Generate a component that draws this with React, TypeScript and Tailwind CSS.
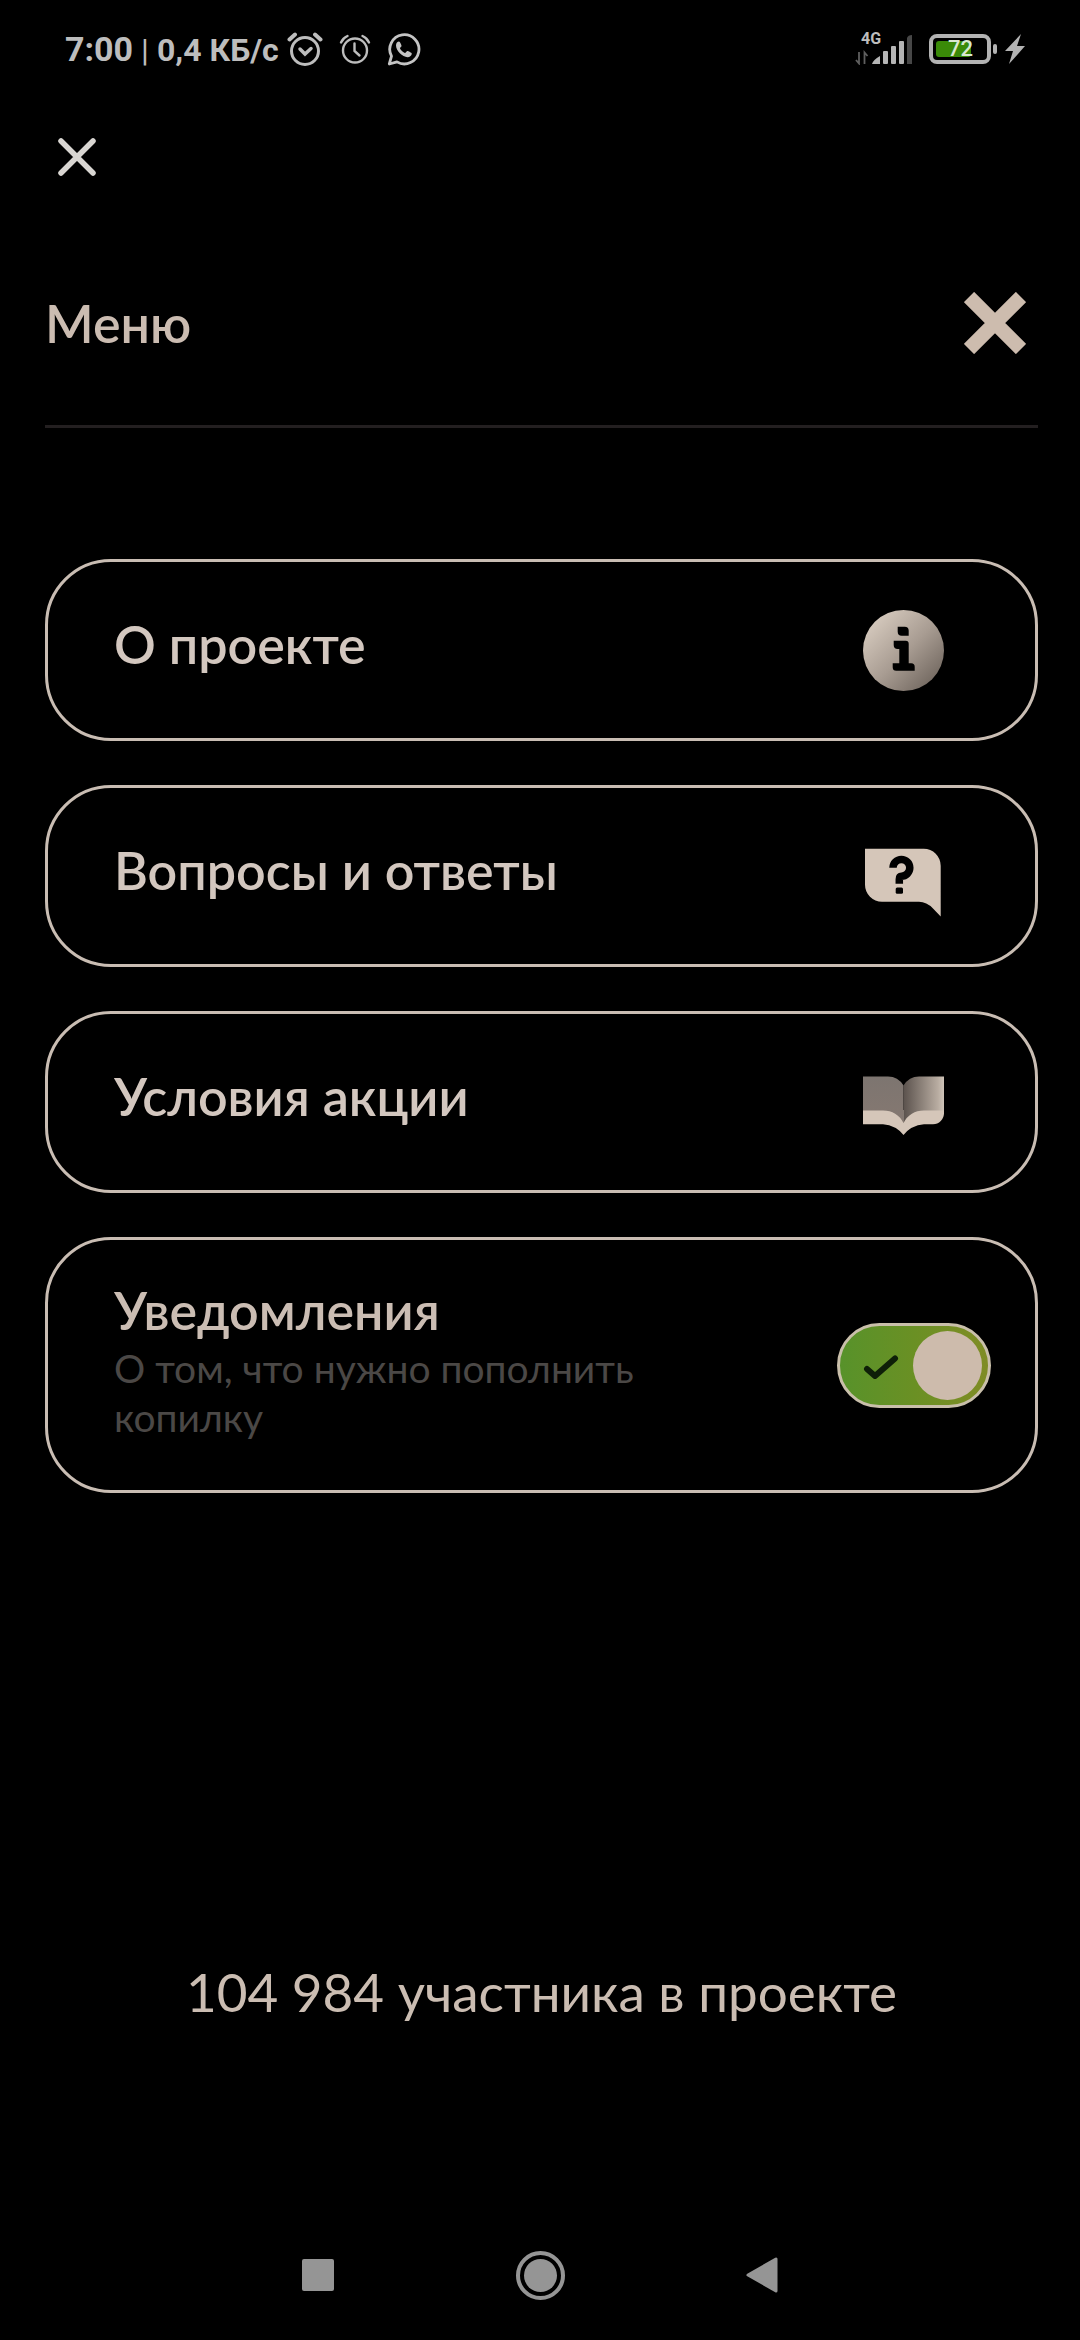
import { useState, type ReactNode } from "react"

function AlarmCheckIcon() {
  return (
    <svg width="36" height="36" viewBox="0 0 36 36" fill="none" stroke="#bdbdbd" strokeWidth="3" strokeLinecap="round">
      <circle cx="18" cy="20" r="13.5" />
      <path d="M2.5 8.5 8 3.5M33.5 8.5 28 3.5" strokeWidth="4" />
      <path d="m13 18 5 5 6-5.5" strokeWidth="3.5" />
    </svg>
  )
}

function AlarmIcon() {
  return (
    <svg width="32" height="32" viewBox="0 0 32 32" fill="none" stroke="#bdbdbd" strokeWidth="2.4" strokeLinecap="round">
      <circle cx="16" cy="17.5" r="12" />
      <path d="M2 9.5Q4 5 8.5 3M30 9.5Q28 5 23.5 3" />
      <path d="M15.5 10.5V18l5 4.5" />
    </svg>
  )
}

function WhatsAppIcon() {
  return (
    <svg width="34" height="34" viewBox="0 0 34 34" fill="none">
      <path
        d="M2.3 32 4.5 24.2A14.6 14.6 0 1 1 10 29.9Z"
        stroke="#c4c4c4"
        strokeWidth="2.8"
        strokeLinejoin="round"
      />
      <path
        d="M12 9.5c-1.500 0-3 1.600-3 4 0 5.500 6.500 11.500 11.500 11.700 2.400 0 4.300-1.700 4.300-3.700 0-.7-4-2.700-4.600-2.500-.7.2-1.500 2-2.200 2-1.400-.2-4.900-3.300-5-4.700 0-.7 1.600-1.500 1.600-2.200S13 9.500 12 9.500Z"
        fill="#c4c4c4"
      />
    </svg>
  )
}

function SignalIcon() {
  return (
    <svg width="58" height="32" viewBox="0 0 58 32">
      <path d="M4 19v11.500L1 27M9.500 31V19.500l3 3.500" fill="none" stroke="#5f5f5f" strokeWidth="1.8" />
      <path d="M17 31q1-4 8-8v8Z" fill="#b5b5b5" />
      <rect x="28" y="18" width="5" height="13" rx="1" fill="#b5b5b5" />
      <rect x="36" y="13" width="5" height="18" rx="1" fill="#b5b5b5" />
      <rect x="44" y="8" width="5" height="23" rx="1" fill="#b5b5b5" />
      <path d="M52 5q1-3 5-3v29h-5Z" fill="#474747" />
    </svg>
  )
}

function InfoIcon() {
  return (
    <svg width="81" height="81" viewBox="0 0 81 81">
      <defs>
        <linearGradient id="info" x1="0.15" y1="0.15" x2="0.9" y2="0.9">
          <stop offset="0" stopColor="#d2c6ba" />
          <stop offset="0.5" stopColor="#a89c92" />
          <stop offset="1" stopColor="#71675f" />
        </linearGradient>
      </defs>
      <circle cx="40.5" cy="40.5" r="40.5" fill="url(#info)" />
      <path d="M34.7 16.7h7q4 0 4 4v5h-7q-4 0-4-4Z" />
      <path d="M30.700 30.700h12q3 0 3 3v19.600h2.500q3.500 0 3.500 3.500v4H33.200q-3.500 0-3.500-3.500v-4h6.600V39h-1.600q-4 0-4-4Z" />
    </svg>
  )
}

function QuestionIcon() {
  return (
    <svg width="81" height="81" viewBox="0 0 81 81" fill="none">
      <path d="M2 12.8h58.7a17 17 0 0 1 17 17v50.7L70 72.5Q63.5 65.800 56 65.8H19a17 17 0 0 1-17-17Z" fill="#d5c6b9" />
      <path d="M30 31.8a8.4 8.4 0 1 1 8.4 8.4q-2.100 0-2.100 3v4.6" stroke="#000" strokeWidth="7.5" />
      <rect x="32.7" y="51.5" width="7.3" height="6.3" rx="1.5" fill="#000" />
    </svg>
  )
}

function BookIcon() {
  return (
    <svg width="81" height="81" viewBox="0 0 81 81">
      <defs>
        <linearGradient id="pageLeft" x1="0" y1="0" x2="0" y2="1">
          <stop offset="0" stopColor="#7d7570" />
          <stop offset="1" stopColor="#857871" />
        </linearGradient>
        <linearGradient id="pageRight">
          <stop offset="0" stopColor="#5b524d" />
          <stop offset="0.85" stopColor="#b8aca1" />
          <stop offset="1" stopColor="#cfc4b9" />
        </linearGradient>
      </defs>
      <path d="M0 48h81v3.3a11 11 0 0 1-11 11H61Q48 63.5 40.5 73 33 63.5 20 62.3H0Z" fill="#d5c6b9" />
      <path d="M0 14.5h25q10 0 15.5 9V61Q34 48.5 20 48.5H0Z" fill="url(#pageLeft)" />
      <path d="M81 14.5H56q-10 0-15.5 9V61Q47 48.5 61 48.5h20Z" fill="url(#pageRight)" />
    </svg>
  )
}

function StatusBar() {
  return (
    <div className="flex h-[98px] items-center justify-between pr-[55px] pl-[65px] font-[Roboto,sans-serif] text-[#bdbdbd]">
      <div className="flex items-center">
        <div className="flex items-baseline gap-2 leading-10">
          <span className="text-[34px] font-bold">7:00</span>
          <span className="text-[32px]">|</span>
          <span className="text-[32px] font-bold">0,4 КБ/с</span>
        </div>
        <div className="ml-2 flex items-center gap-4">
          <AlarmCheckIcon />
          <AlarmIcon />
          <WhatsAppIcon />
        </div>
      </div>
      <div className="flex items-center">
        <div className="relative">
          <SignalIcon />
          <span className="absolute -top-1 left-1.5 text-base leading-5 font-bold">4G</span>
        </div>
        <div className="ml-4 flex h-[30px] w-[62px] items-center rounded-lg border-4 border-[#b3b3b3] px-[3px]">
          <div className="flex h-4 w-[35px] items-center rounded-[3px] bg-[#3a8a08] pl-3 text-[22px] leading-4 font-medium text-[#d9e8d0]">
            72
          </div>
        </div>
        <div className="ml-0.5 h-2.5 w-1 rounded-sm bg-[#b3b3b3]" />
        <svg className="ml-2" width="20" height="30" viewBox="0 0 20 30" fill="#b3b3b3">
          <path d="M16 0 0 17h8L4 30 20 12h-8Z" />
        </svg>
      </div>
    </div>
  )
}

function MenuItem({ title, icon }: { title: string; icon: ReactNode }) {
  return (
    <button
      type="button"
      className="flex h-[182px] w-full items-center justify-between rounded-[66px] border-[3px] border-[#c9bdb3] pr-[91px] pl-[66px] text-left"
    >
      <span className="pb-3 text-[52px] leading-[62px] font-semibold text-[#d3c7bf]">{title}</span>
      {icon}
    </button>
  )
}

function NotificationsItem() {
  const [enabled, setEnabled] = useState(true)

  return (
    <div className="flex items-center justify-between rounded-[66px] border-[3px] border-[#c9bdb3] pr-11 pl-[66px]">
      <div className="max-w-[600px] pt-[39px] pb-12">
        <label htmlFor="notifications" className="block text-[52px] leading-[62px] font-semibold text-[#cbbdb3]">
          Уведомления
        </label>
        <p id="notifications-hint" className="pt-[3px] text-[39px] leading-[49px] text-[#4b4846]">
          О том, что нужно пополнить копилку
        </p>
      </div>
      <div className="relative h-[85px] w-[154px] shrink-0">
        <input
          id="notifications"
          type="checkbox"
          role="switch"
          aria-describedby="notifications-hint"
          checked={enabled}
          onChange={(e) => setEnabled(e.target.checked)}
          className="peer block size-full appearance-none rounded-full border-[3px] border-[#c9bfaa] bg-[#2b2826] checked:bg-linear-to-r checked:from-[#57922a] checked:via-[#6a9024] checked:to-[#7f8c25]"
        />
        <svg
          className="pointer-events-none absolute top-8 left-[26px] hidden peer-checked:block"
          width="36"
          height="26"
          viewBox="0 0 36 26"
          fill="none"
          stroke="#0e1f08"
          strokeWidth="6"
          strokeLinecap="round"
          strokeLinejoin="round"
        >
          <path d="m4 14 8 7L32 3.5" />
        </svg>
        <span className="pointer-events-none absolute top-2 left-[9px] size-[69px] rounded-full bg-[#cdbbac] peer-checked:right-[9px] peer-checked:left-auto" />
      </div>
    </div>
  )
}

function NavBar() {
  return (
    <nav className="flex h-[130px] items-center justify-center">
      <button type="button" aria-label="Недавние" className="flex w-[222px] justify-center">
        <span className="size-8 rounded-xs bg-[#959595]" />
      </button>
      <button type="button" aria-label="Домой" className="flex w-[222px] justify-center">
        <span className="flex size-[49px] items-center justify-center rounded-full border-4 border-[#959595]">
          <span className="size-[33px] rounded-full bg-[#959595]" />
        </span>
      </button>
      <button type="button" aria-label="Назад" className="flex w-[222px] justify-center">
        <svg width="32" height="36" viewBox="0 0 32 36" fill="#959595" stroke="#959595" strokeWidth="3" strokeLinejoin="round">
          <path d="M30 2v32L2 18Z" />
        </svg>
      </button>
    </nav>
  )
}

export default function App() {
  return (
    <div className="flex min-h-screen flex-col bg-black font-[Lato,sans-serif]">
      <StatusBar />

      <div className="flex h-[118px] items-center pl-[57px]">
        <button type="button" aria-label="Закрыть">
          <svg width="40" height="40" viewBox="0 0 40 40" stroke="#d9d6d2" strokeWidth="5.5" strokeLinecap="round">
            <path d="m4 4 32 32M36 4 4 36" />
          </svg>
        </button>
      </div>

      <main className="flex flex-1 flex-col pr-[42px] pl-[45px]">
        <header className="flex items-center justify-between border-b-[3px] border-[#231f20] pt-[75px] pr-3 pb-[70px]">
          <h1 className="text-[52px] leading-[64px] font-semibold text-[#cbbcb1]">Меню</h1>
          <button type="button" aria-label="Закрыть меню">
            <svg width="62" height="62" viewBox="0 0 62 62" stroke="#cdbcae" strokeWidth="14.5">
              <path d="m5 5 52 52M57 5 5 57" />
            </svg>
          </button>
        </header>

        <div className="mt-[131px] flex flex-col gap-11">
          <MenuItem title="О проекте" icon={<InfoIcon />} />
          <MenuItem title="Вопросы и ответы" icon={<QuestionIcon />} />
          <MenuItem title="Условия акции" icon={<BookIcon />} />
          <NotificationsItem />
        </div>

        <p className="mt-auto pb-[186px] text-center text-[53px] leading-[64px] text-[#cbbdb2]">
          104 984 участника в проекте
        </p>
      </main>

      <NavBar />
    </div>
  )
}
